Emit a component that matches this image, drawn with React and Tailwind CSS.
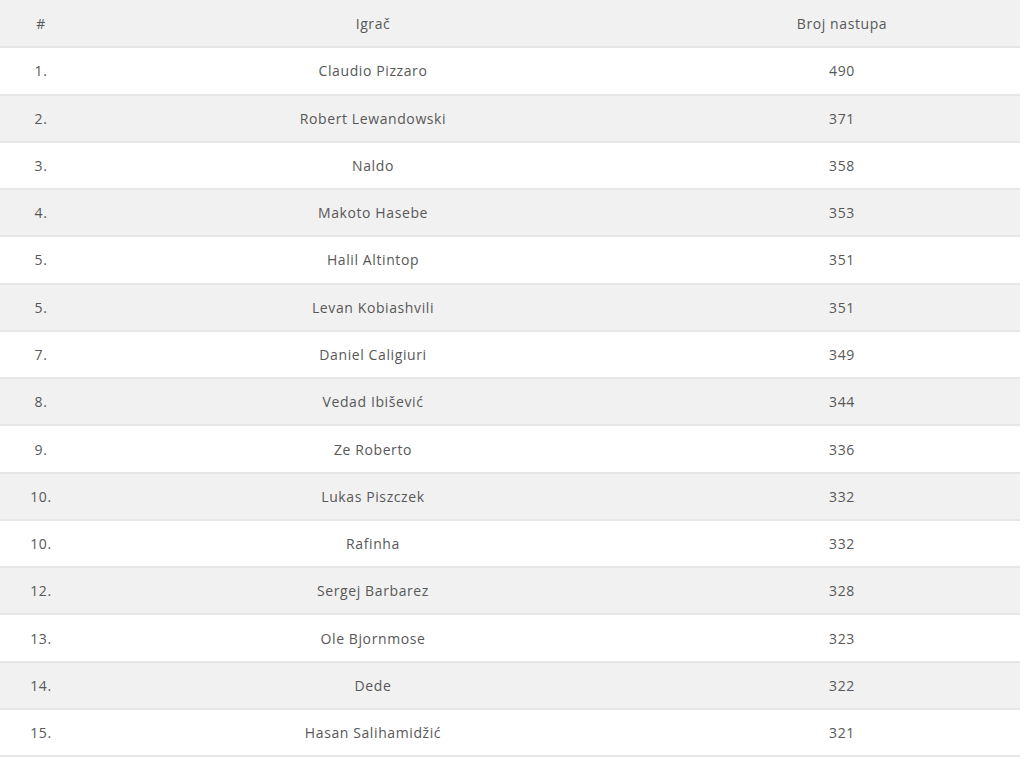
const players = [
    ["1.", "Claudio Pizzaro", 490],
    ["2.", "Robert Lewandowski", 371],
    ["3.", "Naldo", 358],
    ["4.", "Makoto Hasebe", 353],
    ["5.", "Halil Altintop", 351],
    ["5.", "Levan Kobiashvili", 351],
    ["7.", "Daniel Caligiuri", 349],
    ["8.", "Vedad Ibišević", 344],
    ["9.", "Ze Roberto", 336],
    ["10.", "Lukas Piszczek", 332],
    ["10.", "Rafinha", 332],
    ["12.", "Sergej Barbarez", 328],
    ["13.", "Ole Bjornmose", 323],
    ["14.", "Dede", 322],
    ["15.", "Hasan Salihamidžić", 321],
];

const App = () => {
    return (
        <div className="bg-white min-h-screen w-full font-['Open_Sans',sans-serif] text-[14px] tracking-[0.6px] text-[#585858]">
            <table className="w-[1020px] border-collapse">
                <thead>
                    <tr className="bg-[#f1f1f1] h-[47.27px] border-b-2 border-[#e6e6e6]">
                        <th className="w-[82px] font-normal text-center">#</th>
                        <th className="w-[582px] font-normal text-center">Igrač</th>
                        <th className="font-normal text-center">Broj nastupa</th>
                    </tr>
                </thead>
                <tbody>
                    {players.map(([rank, name, apps], i) => (
                        <tr
                            key={name}
                            className={`h-[47.27px] border-b-2 border-[#e6e6e6] ${i % 2 === 1 ? "bg-[#f1f1f1]" : "bg-white"}`}
                        >
                            <td className="text-center">{rank}</td>
                            <td className="text-center">{name}</td>
                            <td className="text-center">{apps}</td>
                        </tr>
                    ))}
                </tbody>
            </table>
        </div>
    );
};

export default App;
